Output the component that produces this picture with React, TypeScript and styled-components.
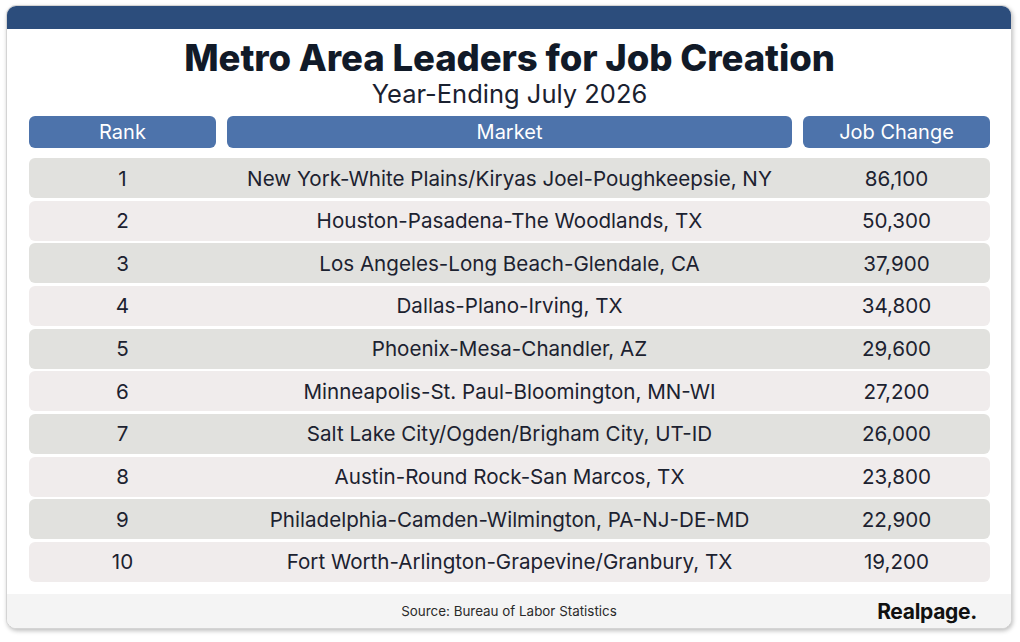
import React from 'react';
import styled, { createGlobalStyle } from 'styled-components';

const GlobalStyle = createGlobalStyle`
  html, body {
    margin: 0;
    padding: 0;
    background: #ffffff;
  }
  body {
    font-family: Inter, 'Liberation Sans', sans-serif;
  }
`;

type Row = { rank: number; market: string; change: string };

const ROWS: Row[] = [
  { rank: 1, market: 'New York-White Plains/Kiryas Joel-Poughkeepsie, NY', change: '86,100' },
  { rank: 2, market: 'Houston-Pasadena-The Woodlands, TX', change: '50,300' },
  { rank: 3, market: 'Los Angeles-Long Beach-Glendale, CA', change: '37,900' },
  { rank: 4, market: 'Dallas-Plano-Irving, TX', change: '34,800' },
  { rank: 5, market: 'Phoenix-Mesa-Chandler, AZ', change: '29,600' },
  { rank: 6, market: 'Minneapolis-St. Paul-Bloomington, MN-WI', change: '27,200' },
  { rank: 7, market: 'Salt Lake City/Ogden/Brigham City, UT-ID', change: '26,000' },
  { rank: 8, market: 'Austin-Round Rock-San Marcos, TX', change: '23,800' },
  { rank: 9, market: 'Philadelphia-Camden-Wilmington, PA-NJ-DE-MD', change: '22,900' },
  { rank: 10, market: 'Fort Worth-Arlington-Grapevine/Granbury, TX', change: '19,200' },
];

export default function App() {
  return (
    <>
      <GlobalStyle />
      <Page>
        <Card>
          <TopBar />
          <Body>
            <Title>Metro Area Leaders for Job Creation</Title>
            <Subtitle>Year-Ending July 2026</Subtitle>
            <Grid>
              <HeaderCell>Rank</HeaderCell>
              <HeaderCell>Market</HeaderCell>
              <HeaderCell>Job Change</HeaderCell>
            </Grid>
            <Rows>
              {ROWS.map((row, i) => (
                <DataRow key={row.rank} even={i % 2 === 1}>
                  <Cell>{row.rank}</Cell>
                  <Cell>{row.market}</Cell>
                  <Cell>{row.change}</Cell>
                </DataRow>
              ))}
            </Rows>
          </Body>
          <Footer>
            <Source>Source: Bureau of Labor Statistics</Source>
            <Brand>Realpage.</Brand>
          </Footer>
        </Card>
      </Page>
    </>
  );
}

const Page = styled.div`
  width: 1020px;
  height: 642px;
  padding: 5px 8px 13px 6px;
  box-sizing: border-box;
`;

const Card = styled.div`
  height: 624px;
  display: flex;
  flex-direction: column;
  border-radius: 10px;
  overflow: hidden;
  background: #ffffff;
  border: 1px solid #d4d4d4;
  box-shadow: 1px 2px 4px rgba(0, 0, 0, 0.25);
  box-sizing: border-box;
`;

const TopBar = styled.div`
  height: 23px;
  background: #2c4d7c;
  flex-shrink: 0;
`;

const Body = styled.div`
  flex: 1;
  padding: 0 21px 0 22px;
  display: flex;
  flex-direction: column;
`;

const Title = styled.h1`
  margin: 8px 0 0;
  text-align: center;
  font-size: 36.5px;
  line-height: 42px;
  font-weight: 800;
  letter-spacing: -0.1px;
  color: #111a28;
`;

const Subtitle = styled.div`
  text-align: center;
  font-size: 25.5px;
  line-height: 30px;
  color: #1a2130;
`;

const Grid = styled.div`
  display: grid;
  grid-template-columns: 187px 1fr 187px;
  column-gap: 11px;
  margin-top: 7px;
`;

const HeaderCell = styled.div`
  height: 32px;
  border-radius: 6px;
  background: #4d73ab;
  color: #ffffff;
  font-size: 20px;
  line-height: 32px;
  text-align: center;
`;

const Rows = styled.div`
  display: flex;
  flex-direction: column;
  gap: 2.67px;
  margin-top: 10px;
`;

const DataRow = styled(Grid)<{ even: boolean }>`
  margin-top: 0;
  height: 40px;
  align-items: center;
  border-radius: 6px;
  background: ${({ even }) => (even ? '#f0ecec' : '#e1e1de')};
`;

const Cell = styled.div`
  text-align: center;
  font-size: 20.6px;
  color: #1c2230;
`;

const Footer = styled.div`
  height: 34px;
  flex-shrink: 0;
  background: #f4f4f4;
  display: flex;
  align-items: center;
  justify-content: center;
  position: relative;
`;

const Source = styled.div`
  font-size: 13.4px;
  color: #2a2a2a;
`;

const Brand = styled.div`
  position: absolute;
  right: 34px;
  top: 50%;
  transform: translateY(-50%);
  font-size: 21px;
  font-weight: 700;
  letter-spacing: -0.3px;
  color: #111111;
`;
